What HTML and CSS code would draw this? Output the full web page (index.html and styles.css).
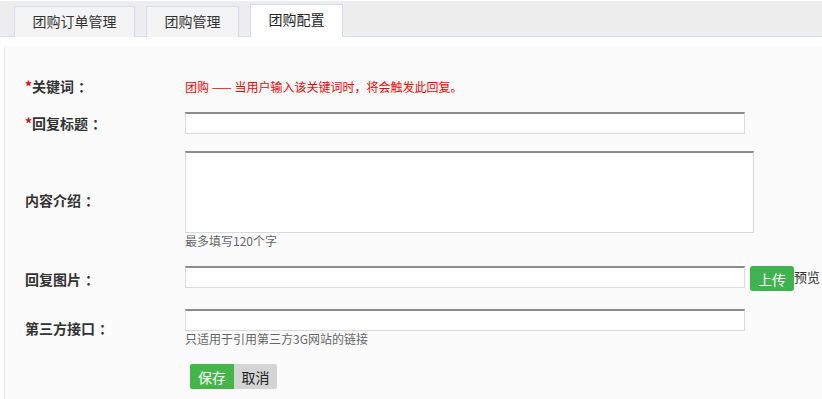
FILE: index.html
```html
<!DOCTYPE html>
<html>
  <head>
    <title>团购配置</title>
    <link rel="stylesheet" href="styles.css">
  </head>
  <body>
    <div class="tabs">
      <a class="tab tab-wide">团购订单管理</a>
      <a class="tab">团购管理</a>
      <a class="tab active">团购配置</a>
    </div>
    <div class="panel">
      <div class="form-row row-keyword">
        <label class="label"><span class="star">*</span>关键词<span class="colon">：</span></label>
        <div class="field"><span class="keyword-tip">团购 —— 当用户输入该关键词时，将会触发此回复。</span></div>
      </div>
      <div class="form-row">
        <label class="label"><span class="star">*</span>回复标题<span class="colon">：</span></label>
        <div class="field"><input type="text" class="input"></div>
      </div>
      <div class="form-row">
        <label class="label">内容介绍<span class="colon">：</span></label>
        <div class="field">
          <textarea class="textarea"></textarea>
          <div class="hint">最多填写120个字</div>
        </div>
      </div>
      <div class="form-row row-image">
        <label class="label">回复图片<span class="colon">：</span></label>
        <div class="field field-inline">
          <input type="text" class="input">
          <button class="btn btn-upload">上传</button>
          <span class="preview">预览</span>
        </div>
      </div>
      <div class="form-row">
        <label class="label">第三方接口<span class="colon">：</span></label>
        <div class="field">
          <input type="text" class="input">
          <div class="hint">只适用于引用第三方3G网站的链接</div>
        </div>
      </div>
      <div class="actions">
        <button class="btn btn-save">保存</button><button class="btn btn-cancel">取消</button>
      </div>
    </div>
  </body>
</html>
```

FILE: styles.css
```css
/* Page */
body {
  margin: 0;
  font-family: "Noto Sans CJK SC", "Noto Sans", sans-serif;
  font-size: 13px;
  color: #333;
  background-color: #fff;
}

/* Tab bar */
.tabs {
  display: flex;
  align-items: flex-end;
  gap: 11px;
  margin-top: 1px;
  height: 35px;
  padding-left: 14px;
  background-color: #ededed;
  border-bottom: 1px solid #d6dde8;
}

.tab {
  width: 91px;
  height: 30px;
  line-height: 29px;
  text-align: center;
  font-size: 14px;
  color: #333;
  background-color: #f4f4f4;
  border: 1px solid #d6dde8;
  border-bottom: none;
  margin-bottom: -1px;
  cursor: pointer;
}

.tab-wide {
  width: 119px;
}

.tab.active {
  height: 32px;
  background-color: #fff;
  color: #222;
}

/* Form panel */
.panel {
  margin: 9px 0 0 4px;
  padding: 30px 0 10px 20px;
  min-height: 313px;
  box-sizing: border-box;
  background-color: #fbfbfb;
  border-left: 1px solid #e9e9e9;
}

.form-row {
  display: flex;
  align-items: center;
  margin-bottom: 17px;
}

.row-keyword {
  height: 20px;
  margin-bottom: 16px;
}

.label {
  width: 160px;
  flex-shrink: 0;
  font-size: 14px;
  font-weight: bold;
  color: #333;
}

.colon {
  padding-left: 4px;
}

.star {
  color: #e60000;
}

.keyword-tip {
  font-size: 12px;
  color: #f00;
}

.field-inline {
  display: flex;
  align-items: flex-start;
}

/* Inputs */
.input {
  display: block;
  width: 560px;
  height: 22px;
  margin: 0;
  padding: 0 4px;
  box-sizing: border-box;
  border: 1px solid #dadada;
  border-top: 2px solid #8c8c8c;
  background-color: #fff;
  font-family: inherit;
}

.textarea {
  display: block;
  width: 569px;
  height: 82px;
  margin: 0;
  padding: 2px 4px;
  box-sizing: border-box;
  border: 1px solid #dadada;
  border-top: 2px solid #8c8c8c;
  background-color: #fff;
  resize: none;
}

.hint {
  font-size: 12px;
  line-height: 16px;
  color: #666;
}

/* Buttons */
.btn {
  height: 25px;
  padding: 0;
  border: none;
  font-family: inherit;
  font-size: 14px;
  cursor: pointer;
}

.btn-upload {
  width: 44px;
  margin-left: 5px;
  border-radius: 3px;
  background-color: #3fb34f;
  color: #fff;
}

.preview {
  line-height: 22px;
  font-size: 13px;
  color: #333;
}

.row-image {
  margin-bottom: 18px;
}

.actions {
  display: flex;
  margin: 17px 0 0 165px;
}

.btn-save {
  width: 44px;
  border-radius: 2px 0 0 2px;
  background-color: #44b549;
  color: #fff;
}

.btn-cancel {
  width: 43px;
  border-radius: 0 2px 2px 0;
  background-color: #d4d4d4;
  color: #222;
}
```
